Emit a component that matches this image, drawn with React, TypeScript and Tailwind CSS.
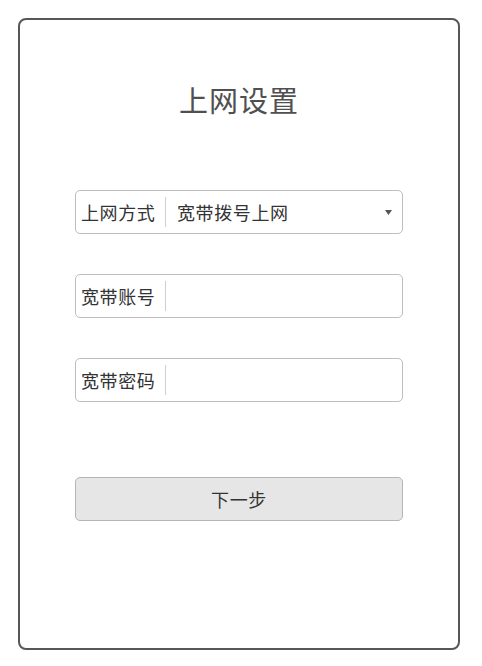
import { useState } from 'react'

const font = { fontFamily: '"Noto Sans CJK SC", "Noto Sans", sans-serif' }

function Field({ label, children }: { label: string; children?: React.ReactNode }) {
    return (
        <div className="flex items-center w-[328px] h-[44px] border border-[#bdbdbd] rounded-[5px] bg-white">
            <span className="pl-[5px] w-[89px] text-[18px] leading-none text-[#333] tracking-[0.6px] whitespace-nowrap">
                {label}
            </span>
            <span className="w-px h-[30px] bg-[#cfcfcf]" />
            <div className="flex-1 flex items-center h-full pl-[11px] pr-[10px]">{children}</div>
        </div>
    )
}

export default function App() {
    const [account, setAccount] = useState('')
    const [password, setPassword] = useState('')

    return (
        <div className="w-[482px] h-[666px] bg-white pt-[18px] pl-[18px]" style={font}>
            <div className="w-[442px] h-[632px] border-2 border-[#575757] rounded-[8px] flex flex-col items-center">
                {/* title */}
                <h1 className="mt-[60px] h-[40px] flex items-center text-[29px] text-[#505050] tracking-[1px]">
                    上网设置
                </h1>

                <div className="mt-[70px] flex flex-col gap-[40px]">
                    <Field label="上网方式">
                        <span className="flex-1 text-[18px] text-[#333] tracking-[0.6px]">宽带拨号上网</span>
                        <svg width="7" height="5" viewBox="0 0 7 5">
                            <path d="M0 0 H7 L3.5 5 Z" fill="#555" />
                        </svg>
                    </Field>
                    <Field label="宽带账号">
                        <input
                            className="w-full h-full outline-none text-[18px] text-[#333] bg-transparent"
                            value={account}
                            onChange={(e) => setAccount(e.target.value)}
                        />
                    </Field>
                    <Field label="宽带密码">
                        <input
                            type="password"
                            className="w-full h-full outline-none text-[18px] text-[#333] bg-transparent"
                            value={password}
                            onChange={(e) => setPassword(e.target.value)}
                        />
                    </Field>
                </div>

                <button className="mt-[75px] w-[328px] h-[44px] border border-[#b5b5b5] rounded-[5px] bg-[#e6e6e6] text-[18px] text-[#333] tracking-[0.6px]">
                    下一步
                </button>
            </div>
        </div>
    )
}
